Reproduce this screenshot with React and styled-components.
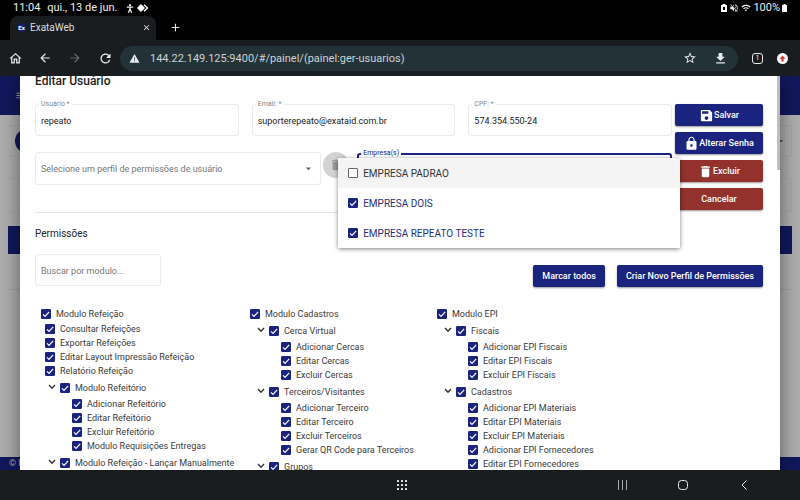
import React from "react";
import styled, { createGlobalStyle, css } from "styled-components";
import {
  MdAccessibilityNew, MdArrowBack, MdArrowForward, MdRefresh, MdWarning, MdStarBorder,
  MdFileDownload, MdClose, MdAdd, MdSave, MdLock, MdDelete, MdArrowDropDown, MdMenu,
  MdVolumeOff, MdWifi, MdOutlineHome,
} from "react-icons/md";

const NAVY = "#1a237e";
const DIMMED_NAVY = "#11185c";

const GlobalStyle = createGlobalStyle`
  *, *::before, *::after { box-sizing: border-box; }
  body { margin: 0; background: #000; font-family: Roboto, "Noto Sans", sans-serif; }
  button, input, select { font: inherit; color: inherit; }
  button { border: 0; padding: 0; margin: 0; background: none; cursor: pointer; }
  ul { list-style: none; margin: 0; padding: 0; }
  svg { display: block; flex: none; }
`;

const Screen = styled.div`
  display: flex;
  flex-direction: column;
  height: 100vh;
  overflow: hidden;
`;

const StatusBar = styled.div`
  display: flex;
  align-items: center;
  height: 16px;
  padding: 0 13px;
  color: #eee;
  font-size: 11px;
  line-height: 16px;
`;
const StatusDate = styled.span`margin: 0 9px 0 4px;`;
const StatusIcons = styled.div`
  display: flex;
  align-items: center;
  gap: ${(p) => p.$gap || 2}px;
  margin-left: ${(p) => (p.$end ? "auto" : 0)};
`;

const TabStrip = styled.div`
  display: flex;
  align-items: center;
  height: 24px;
  padding-left: 10px;
  color: #ddd;
`;
const BrowserTab = styled.div`
  display: flex;
  align-items: center;
  width: 146px;
  height: 24px;
  padding: 0 5px 2px 7px;
  border-radius: 8px 8px 0 0;
  background: #191d20;
  font-size: 10px;
`;
const Favicon = styled.span`
  width: 9px;
  height: 9px;
  margin-right: 4px;
  border-radius: 5px;
  background: #141c6c;
  color: #fff;
  font-size: 6px;
  font-weight: 700;
  line-height: 9px;
  text-align: center;
`;
const IconButton = styled.button`
  display: grid;
  place-items: center;
  flex: none;
  width: ${(p) => p.$size || 16}px;
  height: ${(p) => p.$size || 16}px;
  margin-left: ${(p) => (p.$push ? "auto" : 0)};
  color: ${(p) => p.$color || "#e8eaed"};
`;
const NewTabButton = styled(IconButton)`
  height: 22px;
  align-self: flex-start;
`;

const Toolbar = styled.div`
  display: flex;
  align-items: center;
  gap: 14px;
  height: 36px;
  padding: 0 12px 0 7px;
  background: #191d20;
`;
const AddressBar = styled.div`
  display: flex;
  align-items: center;
  flex: 1;
  gap: 14px;
  height: 25px;
  margin-left: -7px;
  padding: 0 10px 0 9px;
  border-radius: 13px;
  background: #233237;
  color: #e8eaed;
`;
const Url = styled.input`
  flex: 1;
  min-width: 0;
  margin-left: -4px;
  padding: 0;
  border: 0;
  outline: 0;
  background: none;
  color: #ccd3d5;
  font-size: 11px;
`;
const NavGroup = styled.nav`
  display: flex;
  gap: 14px;
`;
const TabCount = styled.span`
  display: grid;
  place-items: center;
  width: 11px;
  height: 11px;
  border: 1px solid #e8eaed;
  border-radius: 3px;
  font-size: 7px;
  line-height: 7px;
`;
const UpdateBadge = styled.span`
  display: grid;
  place-items: center;
  width: 11px;
  height: 11px;
  border-radius: 50%;
  background: #fff;
  color: #d33a32;
`;

const Viewport = styled.div`
  position: relative;
  display: flex;
  flex: 1;
  min-height: 0;
  overflow: hidden;
  padding: 0 20px;
`;

const Backdrop = styled.div`
  position: absolute;
  inset: 0;
  display: flex;
  flex-direction: column;
  background: #adadad;
`;
const PageHeader = styled.div`
  display: flex;
  align-items: center;
  height: 39px;
  padding-left: 15px;
  background: ${DIMMED_NAVY};
  color: #9a9a9a;
`;
const PageBody = styled.div`
  display: flex;
  flex-direction: column;
  flex: 1;
  padding: 10px 8px 0;
`;
const PageCard = styled.div`
  display: flex;
  align-items: center;
  justify-content: space-between;
  height: 32px;
  padding: 0 5px 0 6px;
  border: 1px solid #a3a3a3;
  border-left-color: transparent;
  border-radius: 3px;
  color: #333;
`;
const PageAvatar = styled.span`
  width: 24px;
  height: 24px;
  border-radius: 50%;
  background: ${DIMMED_NAVY};
`;
const PagePanel = styled.div`
  height: 34px;
  margin: 21px 0 14px;
  border: 1px solid #a5a5a5;
  border-left-color: transparent;
`;
const PageTableHead = styled.div`
  height: 28px;
  background: ${DIMMED_NAVY};
`;
const PageRule = styled.div`
  height: 36px;
  border-bottom: 1px solid #a0a0a0;
`;
const PageFooter = styled.div`
  height: 13px;
  padding-left: 9px;
  background: ${DIMMED_NAVY};
  color: #aaa;
  font-size: 9px;
  line-height: 13px;
`;

const Dialog = styled.main`
  position: relative;
  display: flex;
  flex: 1;
  flex-direction: column;
  min-width: 0;
  padding: 0 17px 0 15px;
  background: #fff;
  box-shadow: 0 4px 18px rgba(0, 0, 0, 0.5);
  color: #222;
`;
const ScrollThumb = styled.div`
  position: absolute;
  top: 0;
  right: 0;
  width: 3px;
  height: 94px;
  background: #bdbdbd;
`;
const Title = styled.h1`
  margin: 0 0 17px;
  font-size: 12px;
  font-weight: 500;
  line-height: 11px;
`;
const FormArea = styled.div`
  display: flex;
  gap: 3px;
`;
const Fields = styled.div`
  flex: 1;
  min-width: 0;
`;
const FieldRow = styled.div`
  display: grid;
  grid-template-columns: repeat(3, 1fr);
  gap: 13px;
`;
const SelectRow = styled.div`
  display: flex;
  align-items: flex-start;
  margin-top: 16px;
`;
const outline = css`
  width: 100%;
  height: 32px;
  padding: 1px 6px 0 5px;
  border: 1px solid #ececec;
  border-radius: 3px;
  outline: 0;
  background: #fff;
  font-size: 9px;
`;
const Field = styled.div`
  position: relative;
  min-width: 0;
`;
const FieldLabel = styled.label`
  position: absolute;
  top: -4px;
  left: 4px;
  padding: 0 2px;
  background: #fff;
  color: ${(p) => (p.$active ? NAVY : "#888")};
  font-size: 7px;
  line-height: 8px;
`;
const TextInput = styled.input`
  ${outline}
  &::placeholder { color: #777; opacity: 1; }
`;
const ProfileField = styled(Field)`
  flex: 10;
  margin-right: 2px;
`;
const ProfileSelect = styled.select`
  ${outline}
  height: 33px;
  appearance: none;
  color: #777;
`;
const SelectArrow = styled.span`
  position: absolute;
  top: 10px;
  right: 6px;
  color: #666;
  pointer-events: none;
`;
const RoundButton = styled.button`
  display: grid;
  place-items: center;
  flex: none;
  width: 26px;
  height: 26px;
  margin-right: 8px;
  border-radius: 50%;
  background: #d2d2d2;
  color: #999;
`;
const CompanyField = styled(Field)`
  flex: 11;
  margin-top: 1px;
`;
const CompanyButton = styled.button`
  display: block;
  width: 100%;
  height: 32px;
  border: 2px solid ${NAVY};
  border-radius: 3px;
`;
const CompanyMenu = styled.ul`
  position: absolute;
  z-index: 2;
  top: 5px;
  right: -8px;
  left: -19px;
  border-radius: 2px;
  background: #fff;
  box-shadow: 0 1px 4px rgba(0, 0, 0, 0.5);
`;
const CompanyOption = styled.li`
  display: flex;
  align-items: center;
  height: 30px;
  padding-left: 10px;
  background: ${(p) => (p.$hover ? "#f4f4f4" : "#fff")};
  color: ${(p) => (p.$selected ? "#283078" : "#333")};
  font-size: 10px;
`;
const CheckLabel = styled.label`
  display: flex;
  align-items: center;
  gap: 5px;
  white-space: nowrap;
`;
const CheckBoxInput = styled.input`
  appearance: none;
  flex: none;
  width: 10px;
  height: 10px;
  margin: 0;
  border: 1px solid #666;
  border-radius: 1px;
  background: #fff;
  &:checked {
    border-color: ${NAVY};
    background: ${NAVY} url("data:image/svg+xml,%3Csvg xmlns='http://www.w3.org/2000/svg' viewBox='0 0 10 10'%3E%3Cpath d='M2 5.300l2 2 4.200-4.500' fill='none' stroke='white' stroke-width='1.200'/%3E%3C/svg%3E") center / 10px 10px;
  }
`;
const Rule = styled.hr`
  margin: 27px 0 0;
  border: 0;
  border-top: 1px solid #e6e6e6;
`;
const Actions = styled.div`
  display: flex;
  flex-direction: column;
  gap: 6px;
  width: 88px;
`;
const Button = styled.button`
  display: flex;
  align-items: center;
  justify-content: center;
  height: 22px;
  padding: 0 9px;
  border-radius: 2px;
  background: ${(p) => (p.$danger ? "#93312d" : NAVY)};
  box-shadow: 0 1px 2px rgba(0, 0, 0, 0.4);
  color: #fff;
  font-size: 9px;
  font-weight: 500;
  white-space: nowrap;
`;
const SectionTitle = styled.h2`
  margin: 14px 0 13px;
  font-size: 10px;
  font-weight: 400;
  line-height: 14px;
`;
const SearchRow = styled.div`
  display: flex;
  align-items: flex-start;
  justify-content: space-between;
`;
const SearchField = styled(Field)`
  width: 126px;
`;
const ModuleActions = styled.div`
  display: flex;
  gap: 12px;
  padding-top: 11px;
`;
const Modules = styled.div`
  display: grid;
  grid-template-columns: 209fr 187fr 326fr;
  margin-top: 20px;
  padding-left: 6px;
`;
const Tree = styled.ul`
  font-size: 9px;
  color: #3a3a3a;
`;
const indents = { module: 0, item: 4, group: 7, leaf: 31 };
const TreeRow = styled.li`
  display: flex;
  align-items: center;
  gap: 3px;
  height: ${(p) => (p.$kind === "group" ? 19 : 14)}px;
  padding-left: ${(p) => indents[p.$kind]}px;
  margin-bottom: ${(p) => (p.$spaced ? 1 : 0)}px;
`;
const Toggle = styled.button`
  display: flex;
  align-items: center;
  align-self: flex-start;
  flex: none;
  width: 9px;
  height: 18px;
`;

const SystemNav = styled.nav`
  display: grid;
  grid-template-columns: 1fr auto 1fr;
  align-items: center;
  height: 30px;
  padding: 0 48px 0 52px;
  background: #191d20;
`;
const SystemKeys = styled.div`
  display: flex;
  justify-content: flex-end;
  gap: 45px;
`;

const columns = [
  [
    ["module", "Modulo Refeição"],
    ["item", "Consultar Refeições"],
    ["item", "Exportar Refeições"],
    ["item", "Editar Layout Impressão Refeição"],
    ["item", "Relatório Refeição"],
    ["group", "Modulo Refeitório"],
    ["leaf", "Adicionar Refeitório"],
    ["leaf", "Editar Refeitório"],
    ["leaf", "Excluir Refeitório"],
    ["leaf", "Modulo Requisições Entregas"],
    ["group", "Modulo Refeição - Lançar Manualmente"],
  ],
  [
    ["module", "Modulo Cadastros"],
    ["group", "Cerca Virtual"],
    ["leaf", "Adicionar Cercas"],
    ["leaf", "Editar Cercas"],
    ["leaf", "Excluir Cercas"],
    ["group", "Terceiros/Visitantes"],
    ["leaf", "Adicionar Terceiro"],
    ["leaf", "Editar Terceiro"],
    ["leaf", "Excluir Terceiros"],
    ["leaf", "Gerar QR Code para Terceiros"],
    ["group", "Grupos"],
  ],
  [
    ["module", "Modulo EPI"],
    ["group", "Fiscais"],
    ["leaf", "Adicionar EPI Fiscais"],
    ["leaf", "Editar EPI Fiscais"],
    ["leaf", "Excluir EPI Fiscais"],
    ["group", "Cadastros"],
    ["leaf", "Adicionar EPI Materiais"],
    ["leaf", "Editar EPI Materiais"],
    ["leaf", "Excluir EPI Materiais"],
    ["leaf", "Adicionar EPI Fornecedores"],
    ["leaf", "Editar EPI Fornecedores"],
  ],
];

const companies = [
  ["EMPRESA PADRAO", false],
  ["EMPRESA DOIS", true],
  ["EMPRESA REPEATO TESTE", true],
];

function Check({ label, checked = true }) {
  return (
    <CheckLabel>
      <CheckBoxInput type="checkbox" defaultChecked={checked} />
      {label}
    </CheckLabel>
  );
}

function LabeledInput({ id, label, value }) {
  return (
    <Field>
      <TextInput id={id} defaultValue={value} />
      <FieldLabel htmlFor={id}>{label}</FieldLabel>
    </Field>
  );
}

function BrowserChrome() {
  return (
    <header>
      <StatusBar>
        <span>11:04</span>
        <StatusDate>&nbsp;qui., 13 de jun.</StatusDate>
        <StatusIcons $gap={3}>
          <svg width="8" height="9" viewBox="0 0 8 9" fill="none" stroke="#eee" strokeWidth="1.300">
            <circle cx="4" cy="1.200" r="1.100" fill="#eee" stroke="none" />
            <path d="M.8 3.200h6.400M4 3v3M4 5L2.300 8.700M4 5l1.700 3.700" />
          </svg>
          <svg width="12" height="8" viewBox="0 0 12 8" fill="none">
            <path d="M4 0l4 4-4 4-4-4z" fill="#fff" />
            <path d="M7 .8L10.500 4 7 7.200" stroke="#fff" strokeWidth="1.400" />
          </svg>
        </StatusIcons>
        <StatusIcons $end>
          <svg width="6" height="8" viewBox="0 0 6 8">
            <path d="M1.500 0h3v1H6v7H0V1h1.500z" fill="#fff" />
            <path d="M2 3h2v3H2z" fill="#000" />
          </svg>
          <MdVolumeOff size={10} />
          <MdWifi size={10} />
          <span>100%</span>
          <svg width="5" height="8" viewBox="0 0 5 8" fill="#fff">
            <path d="M1.500 0h2v1H5v7H0V1h1.500z" />
          </svg>
        </StatusIcons>
      </StatusBar>
      <TabStrip>
        <BrowserTab>
          <Favicon>Ex</Favicon>
          <span>ExataWeb</span>
          <IconButton $size={9} $push aria-label="Fechar guia"><MdClose size={9} /></IconButton>
        </BrowserTab>
        <NewTabButton $size={38} aria-label="Nova guia"><MdAdd size={13} /></NewTabButton>
      </TabStrip>
      <Toolbar>
        <NavGroup>
          <IconButton aria-label="Início"><MdOutlineHome size={15} /></IconButton>
          <IconButton aria-label="Voltar"><MdArrowBack size={14} /></IconButton>
          <IconButton $color="#62676b" aria-label="Avançar"><MdArrowForward size={14} /></IconButton>
          <IconButton aria-label="Recarregar"><MdRefresh size={15} /></IconButton>
        </NavGroup>
        <AddressBar>
          <MdWarning size={11} />
          <Url aria-label="Endereço" defaultValue="144.22.149.125:9400/#/painel/(painel:ger-usuarios)" />
          <IconButton aria-label="Favorito"><MdStarBorder size={14} /></IconButton>
          <IconButton aria-label="Baixar"><MdFileDownload size={15} /></IconButton>
        </AddressBar>
        <IconButton $size={11} aria-label="Guias"><TabCount>1</TabCount></IconButton>
        <IconButton $size={11} aria-label="Atualizar">
          <UpdateBadge>
            <svg width="7" height="7" viewBox="0 0 7 7" fill="currentColor">
              <path d="M3.500.5L6.500 3.700H4.600V6.500H2.400V3.700H.5z" />
            </svg>
          </UpdateBadge>
        </IconButton>
      </Toolbar>
    </header>
  );
}

function PageBehind() {
  return (
    <Backdrop aria-hidden="true">
      <PageHeader><MdMenu size={11} /></PageHeader>
      <PageBody>
        <PageCard><PageAvatar /><MdArrowDropDown size={10} /></PageCard>
        <PagePanel />
        <PageTableHead />
        <PageRule />
      </PageBody>
      <PageFooter>© E</PageFooter>
    </Backdrop>
  );
}

function UserForm() {
  return (
    <FormArea>
      <Fields>
        <FieldRow>
          <LabeledInput id="usuario" label="Usuário *" value="repeato" />
          <LabeledInput id="email" label="Email: *" value="suporterepeato@exataid.com.br" />
          <LabeledInput id="cpf" label="CPF: *" value="574.354.550-24" />
        </FieldRow>
        <SelectRow>
          <ProfileField>
            <ProfileSelect aria-label="Perfil de permissões">
              <option>Selecione um perfil de permissões de usuário</option>
            </ProfileSelect>
            <SelectArrow><MdArrowDropDown size={13} /></SelectArrow>
          </ProfileField>
          <RoundButton aria-label="Remover perfil"><MdDelete size={14} /></RoundButton>
          <CompanyField>
            <CompanyButton id="empresas" aria-expanded="true" />
            <FieldLabel $active htmlFor="empresas">Empresa(s)</FieldLabel>
            <CompanyMenu>
              {companies.map(([name, checked], i) => (
                <CompanyOption key={name} $hover={i === 0} $selected={checked}>
                  <Check label={name} checked={checked} />
                </CompanyOption>
              ))}
            </CompanyMenu>
          </CompanyField>
        </SelectRow>
        <Rule />
      </Fields>
      <Actions>
        <Button><MdSave size={15} />Salvar</Button>
        <Button><MdLock size={15} />Alterar Senha</Button>
        <Button $danger><MdDelete size={15} />Excluir</Button>
        <Button $danger>Cancelar</Button>
      </Actions>
    </FormArea>
  );
}

function PermissionColumn({ rows }) {
  return (
    <Tree>
      {rows.map(([kind, label], i) => (
        <TreeRow
          key={label}
          $kind={kind}
          $spaced={kind === "module" && rows[i + 1][0] === "item"}
        >
          {kind === "group" && (
            <Toggle aria-label={"Recolher " + label}>
              <svg width="8" height="6" viewBox="0 0 8 6" fill="none" stroke="#333" strokeWidth="1.400">
                <path d="M1 1l3 3.200L7 1" />
              </svg>
            </Toggle>
          )}
          <Check label={label} />
        </TreeRow>
      ))}
    </Tree>
  );
}

const gridDots = [1, 5, 9];

export default function App() {
  return (
    <Screen>
      <GlobalStyle />
      <BrowserChrome />
      <Viewport>
        <PageBehind />
        <Dialog>
          <Title>Editar Usuário</Title>
          <UserForm />
          <SectionTitle>Permissões</SectionTitle>
          <SearchRow>
            <SearchField>
              <TextInput aria-label="Buscar por modulo" placeholder="Buscar por modulo..." />
            </SearchField>
            <ModuleActions>
              <Button>Marcar todos</Button>
              <Button>Criar Novo Perfil de Permissões</Button>
            </ModuleActions>
          </SearchRow>
          <Modules>
            {columns.map((rows) => <PermissionColumn key={rows[0][1]} rows={rows} />)}
          </Modules>
          <ScrollThumb />
        </Dialog>
      </Viewport>
      <SystemNav>
        <span />
        <IconButton aria-label="Aplicativos">
          <svg width="12" height="12" viewBox="0 0 12 12" fill="#eee">
            {gridDots.map((y) => gridDots.map((x) => <rect key={x + "-" + y} x={x} y={y} width="2" height="2" rx=".5" />))}
          </svg>
        </IconButton>
        <SystemKeys>
          <IconButton aria-label="Recentes">
            <svg width="10" height="10" viewBox="0 0 10 10" stroke="#aaa"><path d="M1.500 0v10M5.500 0v10M9.500 0v10" /></svg>
          </IconButton>
          <IconButton aria-label="Tela inicial">
            <svg width="10" height="10" viewBox="0 0 10 10" fill="none" stroke="#eee"><rect x=".5" y=".5" width="9" height="9" rx="3" /></svg>
          </IconButton>
          <IconButton aria-label="Voltar ao anterior">
            <svg width="6" height="10" viewBox="0 0 6 10" fill="none" stroke="#eee"><path d="M5.500.5L1 5l4.500 4.500" /></svg>
          </IconButton>
        </SystemKeys>
      </SystemNav>
    </Screen>
  );
}
